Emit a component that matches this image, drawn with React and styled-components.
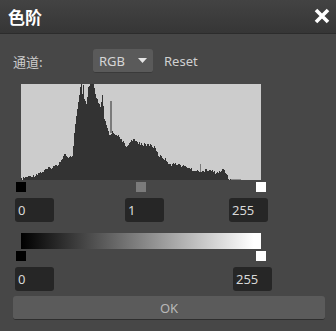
import React from 'react';
import styled, { createGlobalStyle } from 'styled-components';

const GlobalStyle = createGlobalStyle`
  body {
    margin: 0;
    background: #474747;
  }
`;

const Dialog = styled.div`
  width: 336px;
  height: 331px;
  background: #474747;
  font-family: "Noto Sans", "Noto Sans CJK SC", sans-serif;
  color: #cfcfcf;
  overflow: hidden;
`;

const TitleBar = styled.div`
  height: 33px;
  display: flex;
  align-items: center;
  justify-content: space-between;
  padding: 0 6px 0 8px;
  background: linear-gradient(#434343, #363636);
  border-bottom: 1px solid #2c2c2c;
`;

const Title = styled.div`
  font-family: "Noto Sans CJK SC", sans-serif;
  font-size: 17px;
  font-weight: bold;
  color: #ffffff;
  letter-spacing: 0;
`;

const CloseButton = styled.div`
  width: 16px;
  height: 16px;
  display: flex;
  margin-top: -2px;
`;

const ChannelRow = styled.div`
  display: flex;
  align-items: center;
  margin-top: 15px;
  padding-left: 13px;
  height: 24px;
`;

const Label = styled.span`
  width: 80px;
  font-size: 13px;
  font-family: "Noto Sans CJK SC", sans-serif;
  color: #cccccc;
`;

const Select = styled.div`
  width: 60px;
  height: 24px;
  box-sizing: border-box;
  background: #5a5a5a;
  border-radius: 3px;
  border-bottom: 1px solid #3a3a3a;
  display: flex;
  align-items: center;
  justify-content: space-between;
  padding: 0 6px 0 6px;
  font-size: 13px;
  color: #d6d6d6;
`;

const ResetLink = styled.span`
  margin-left: 11px;
  font-size: 13px;
  color: #d0d0d0;
`;

const Histogram = styled.div`
  width: 240px;
  height: 96px;
  margin: 11px 0 0 21px;
  background: #cccccc;
  display: flex;
`;

const HandleTrack = styled.div`
  width: 250px;
  height: 10px;
  margin: ${(p) => p.$top}px 0 0 16px;
  display: flex;
  justify-content: space-between;
`;

const Handle = styled.div`
  width: 10px;
  height: 10px;
  background: ${(p) => p.$color};
`;

const InputRow = styled.div`
  display: grid;
  grid-template-columns: ${(p) => p.$cols};
  margin: 6px 0 0 15px;
`;

const NumberBox = styled.div`
  width: 39px;
  height: 24px;
  box-sizing: border-box;
  background: #262626;
  border-radius: 3px;
  padding-left: 3px;
  font-size: 13px;
  line-height: 24px;
  color: #d8d8d8;
`;

const GradientBar = styled.div`
  width: 240px;
  height: 16px;
  margin: 11px 0 0 21px;
  background: linear-gradient(to right, #000000, #ffffff 97%);
`;

const OkButton = styled.div`
  margin: 5px 11px 0 13px;
  height: 24px;
  box-sizing: border-box;
  background: #5b5b5b;
  border-radius: 3px;
  border-bottom: 1px solid #2e2e2e;
  display: flex;
  align-items: center;
  justify-content: center;
  font-size: 13px;
  color: #b8b8b8;
`;

const keys = [
  [0, 95], [6, 93], [14, 91], [22, 87], [29, 84], [37, 80], [44, 69], [46, 74],
  [51, 73], [53, 49], [55, 31], [57, 19], [59, 4], [60, 0], [61, 11], [62, 0],
  [63, 16], [65, 21], [67, 4], [69, 0], [72, 0], [74, 11], [76, 16], [79, 24],
  [81, 11], [83, 36], [86, 44], [88, 51], [91, 48], [93, 49], [96, 51], [98, 54],
  [101, 57], [104, 62], [106, 62], [109, 57], [112, 56], [116, 58], [119, 59],
  [124, 61], [129, 61], [134, 64], [137, 71], [141, 73], [145, 76], [148, 80],
  [151, 81], [154, 79], [157, 80], [161, 82], [166, 83], [171, 86], [177, 87],
  [181, 87], [186, 86], [191, 87], [195, 89], [199, 88], [202, 85], [205, 90],
  [207, 94], [210, 96], [240, 96],
];

function histoPath() {
  let d = 'M0 96';
  let k = 0;
  for (let x = 0; x < 240; x++) {
    while (k < keys.length - 2 && keys[k + 1][0] <= x) k++;
    const [x0, y0] = keys[k];
    const [x1, y1] = keys[k + 1];
    let y = y0 + ((y1 - y0) * (x - x0)) / (x1 - x0 || 1);
    const noise = Math.sin(x * 12.9898) * 43758.5453;
    y += ((noise - Math.floor(noise)) - 0.5) * 3;
    if (x >= 210) y = 96;
    y = Math.max(0, Math.min(96, y));
    d += ` L${x} ${y.toFixed(1)} L${x + 1} ${y.toFixed(1)}`;
  }
  return d + ' L240 96 Z';
}

const path = histoPath();

export default function App() {
  return (
    <Dialog>
      <GlobalStyle />
      <TitleBar>
        <Title>色阶</Title>
        <CloseButton>
          <svg width="16" height="16" viewBox="0 0 16 16">
            <path d="M2 2 L14 14 M14 2 L2 14" stroke="#fff" strokeWidth="3.6" />
          </svg>
        </CloseButton>
      </TitleBar>

      <ChannelRow>
        <Label>通道:</Label>
        <Select>
          <span>RGB</span>
          <svg width="9" height="5" viewBox="0 0 9 5">
            <path d="M0 0 L9 0 L4.5 5 Z" fill="#e6e6e6" />
          </svg>
        </Select>
        <ResetLink>Reset</ResetLink>
      </ChannelRow>

      <Histogram>
        <svg width="240" height="96" viewBox="0 0 240 96" shapeRendering="crispEdges">
          <path d={path} fill="#333333" />
          <rect x="89" y="17" width="2" height="32" fill="#7a7a7a" />
          <rect x="179" y="80" width="1" height="8" fill="#7a7a7a" />
          <rect x="210" y="95" width="10" height="1" fill="#8a8a8a" />
        </svg>
      </Histogram>

      <HandleTrack $top={2}>
        <Handle $color="#000000" />
        <Handle $color="#7b7b7b" />
        <Handle $color="#ffffff" />
      </HandleTrack>

      <InputRow $cols="110px 104px 39px">
        <NumberBox>0</NumberBox>
        <NumberBox>1</NumberBox>
        <NumberBox>255</NumberBox>
      </InputRow>

      <GradientBar />

      <HandleTrack $top={2}>
        <Handle $color="#000000" />
        <Handle $color="#ffffff" />
      </HandleTrack>

      <InputRow $cols="218px 39px">
        <NumberBox>0</NumberBox>
        <NumberBox>255</NumberBox>
      </InputRow>

      <OkButton>OK</OkButton>
    </Dialog>
  );
}
